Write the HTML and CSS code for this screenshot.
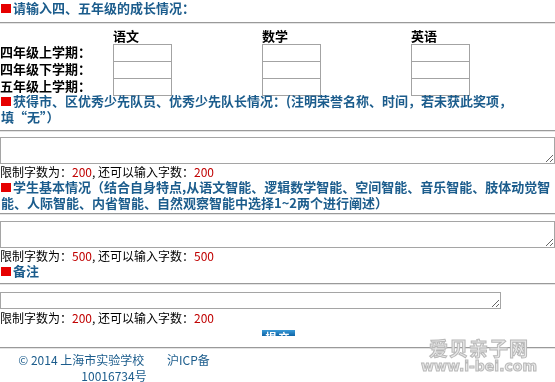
FILE: index.html
```html
<!DOCTYPE html>
<html lang="zh-cn">
<head>
    <meta charset="UTF-8">
    <title>成长情况</title>
    <link rel="stylesheet" href="styles.css">
</head>
<body>

<div class="page">
    <div class="title"><span class="mark"></span>请输入四、五年级的成长情况：</div>
    <div class="line line-top"></div>

    <div class="grade-table">
        <div class="cell"></div>
        <div class="cell head">语文</div>
        <div class="cell head">数学</div>
        <div class="cell head">英语</div>

        <div class="cell label">四年级上学期：</div>
        <div class="cell"><input type="text" class="score"></div>
        <div class="cell"><input type="text" class="score"></div>
        <div class="cell"><input type="text" class="score"></div>

        <div class="cell label">四年级下学期：</div>
        <div class="cell"><input type="text" class="score"></div>
        <div class="cell"><input type="text" class="score"></div>
        <div class="cell"><input type="text" class="score"></div>

        <div class="cell label">五年级上学期：</div>
        <div class="cell"><input type="text" class="score"></div>
        <div class="cell"><input type="text" class="score"></div>
        <div class="cell"><input type="text" class="score"></div>
    </div>

    <div class="title"><span class="mark"></span>获得市、区优秀少先队员、优秀少先队长情况：(注明荣誉名称、时间，若未获此奖项，<br>填“无”）</div>
    <div class="line line-honor"></div>
    <textarea class="box box-wide"></textarea>
    <div class="limit">限制字数为：<span class="num">200</span>, 还可以输入字数：<span class="num">200</span></div>

    <div class="title"><span class="mark"></span>学生基本情况（结合自身特点,从语文智能、逻辑数学智能、空间智能、音乐智能、肢体动觉智<br>能、人际智能、内省智能、自然观察智能中选择1~2两个进行阐述）</div>
    <div class="line line-basic"></div>
    <textarea class="box box-wide"></textarea>
    <div class="limit">限制字数为：<span class="num">500</span>, 还可以输入字数：<span class="num">500</span></div>

    <div class="title"><span class="mark"></span>备注</div>
    <div class="line line-note"></div>
    <textarea class="box box-note"></textarea>
    <div class="limit limit-last">限制字数为：<span class="num">200</span>, 还可以输入字数：<span class="num">200</span></div>

    <div class="actions">
        <button type="button" class="submit">提交</button>
    </div>
    <div class="line line-foot"></div>

    <div class="footer">
        <div>&copy; 2014 上海市实验学校 <span class="gap"></span>沪ICP备</div>
        <div>10016734号</div>
    </div>

    <div class="watermark">
        <div class="wm-cn">爱贝亲子网</div>
        <div class="wm-en">www.i-bei.com</div>
    </div>
</div>

</body>
</html>
```

FILE: styles.css
```css
body {
    margin: 0;
    padding: 0;
    background-color: #fff;
    font-family: "Noto Sans CJK SC", "Noto Sans", sans-serif;
    font-size: 12px;
    color: #000;
}

.page {
    position: relative;
    width: 555px;
}

.title {
    font-size: 13px;
    font-weight: bold;
    line-height: 16px;
    color: #1b5c8c;
    white-space: nowrap;
    padding-left: 1px;
}

.mark {
    display: inline-block;
    width: 10px;
    height: 9px;
    margin-right: 2px;
    background-color: #e60000;
}

/* grey rule under each heading */
.line {
    height: 0;
    border-top: 1px solid #9a9a9a;
    border-bottom: 1px solid #e4e4e4;
}

.line-top {
    margin: 6px 0 4px;
}

.line-honor {
    margin: 5px 0 5px;
}

.line-basic {
    margin: 2px 0 6px;
}

.line-note {
    margin: 4px 0 7px;
}

.line-foot {
    margin: 10px 0 3px;
}

.grade-table {
    display: grid;
    grid-template-columns: 113px 149px 149px 1fr;
    grid-template-rows: 16px 17px 17px 17px;
    margin-bottom: -2px;
}

.cell {
    height: 17px;
}

.head {
    font-size: 13px;
    font-weight: bold;
    line-height: 16px;
    height: 16px;
}

.label {
    font-size: 13px;
    font-weight: bold;
    line-height: 15px;
    white-space: nowrap;
}

.score {
    display: block;
    width: 59px;
    height: 18px;
    box-sizing: border-box;
    margin: 0;
    padding: 0 2px;
    border: 1px solid #a3a3a3;
    background: #fff;
    font-size: 12px;
}

.box {
    display: block;
    box-sizing: border-box;
    margin: 0;
    padding: 1px 2px;
    border: 1px solid #a5a5a5;
    background: #fff;
    font-family: inherit;
    font-size: 12px;
}

.box-wide {
    width: 100%;
    height: 27px;
}

.box-note {
    width: 501px;
    height: 17px;
}

.limit {
    line-height: 16px;
    margin-bottom: -1px;
    white-space: nowrap;
}

.limit-last {
    margin-top: 1px;
    margin-bottom: 0;
}

.num {
    color: #c00000;
}

.actions {
    text-align: center;
    padding-top: 4px;
    height: 7px;
}

.submit {
    display: inline-block;
    vertical-align: top;
    width: 33px;
    height: 6px;
    margin-left: 2px;
    padding: 0;
    border: 0;
    overflow: hidden;
    background: linear-gradient(#3a9bd8, #0f64a6);
    color: #fff;
    font-family: inherit;
    font-size: 11px;
    font-weight: bold;
    line-height: 14px;
    letter-spacing: 2px;
}

.footer {
    width: 200px;
    margin-left: 14px;
    text-align: center;
    color: #1b5c8c;
    font-size: 12px;
    line-height: 16px;
}

.gap {
    display: inline-block;
    width: 20px;
}

.watermark {
    position: absolute;
    top: 337px;
    right: 18px;
    text-align: center;
    color: #e8e8e8;
    -webkit-text-stroke: 1px #b8b8b8;
    font-weight: bold;
    pointer-events: none;
}

.wm-cn {
    font-size: 19px;
    line-height: 21px;
    letter-spacing: 1px;
}

.wm-en {
    font-family: "DejaVu Sans", sans-serif;
    font-size: 14px;
    line-height: 16px;
}
```
